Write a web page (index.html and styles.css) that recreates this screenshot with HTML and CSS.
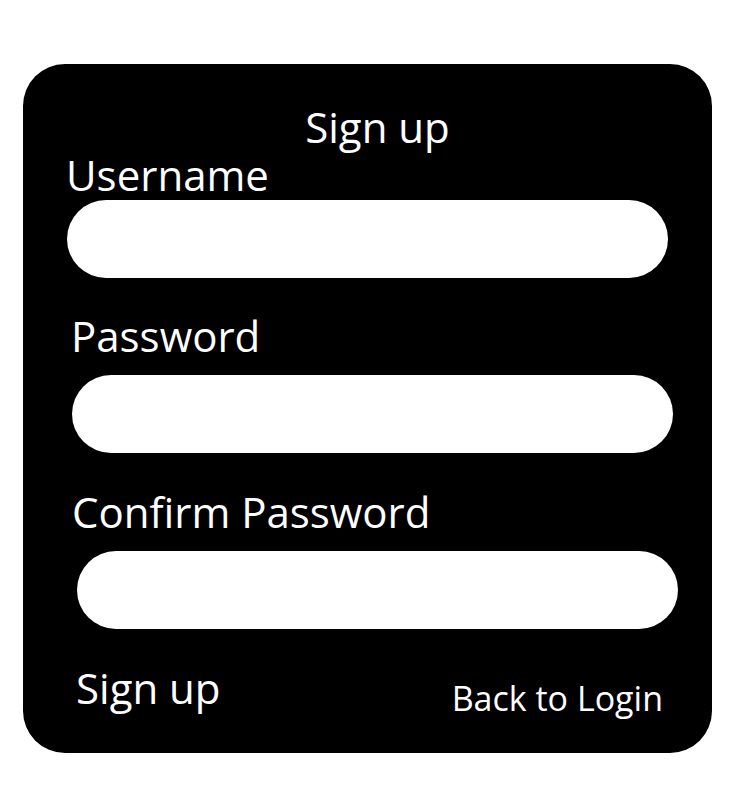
FILE: index.html
```html
<!DOCTYPE html>
<html lang="en">
<head>
<meta charset="utf-8">
<title>Sign up</title>
<link rel="stylesheet" href="styles.css">
</head>
<body>
<main class="card">
  <h1 class="title">Sign up</h1>
  <div class="field field-1">
    <label class="label" for="username">Username</label>
    <input class="input" id="username" type="text">
  </div>
  <div class="field field-2">
    <label class="label" for="password">Password</label>
    <input class="input" id="password" type="password">
  </div>
  <div class="field field-3">
    <label class="label" for="confirm">Confirm Password</label>
    <input class="input" id="confirm" type="password">
  </div>
  <div class="actions">
    <button class="signup" type="button">Sign up</button>
    <a class="back" href="#">Back to Login</a>
  </div>
</main>
</body>
</html>
```
FILE: styles.css
```css
html, body {
  margin: 0;
  padding: 0;
  background: #ffffff;
}
body {
  font-family: "Open Sans", "Noto Sans", sans-serif;
  color: #ffffff;
}
.card {
  box-sizing: border-box;
  margin: 64px 0 0 23px;
  width: 689px;
  height: 689px;
  background: #000000;
  border-radius: 42px;
  display: flex;
  flex-direction: column;
  padding-top: 39px;
}
.title {
  margin: 0 0 0 20px;
  font-size: 42px;
  font-weight: 400;
  line-height: 48px;
  text-align: center;
  align-self: center;
}
.field {
  display: flex;
  flex-direction: column;
  align-items: flex-start;
}
.label {
  font-size: 42px;
  line-height: 48px;
}
.input {
  box-sizing: border-box;
  width: 601px;
  height: 78px;
  border: none;
  border-radius: 39px;
  background: #ffffff;
  outline: none;
  padding: 0 30px;
  font: inherit;
}
.field-1 {
  margin: 0 0 0 44px;
}
.field-1 .label {
  margin: 0 0 1px -1px;
}
.field-2 {
  margin: 34px 0 0 49px;
}
.field-2 .label {
  margin: 0 0 15px -1px;
}
.field-3 {
  margin: 35px 0 0 54px;
}
.field-3 .label {
  margin: 0 0 15px -5px;
}
.actions {
  display: flex;
  justify-content: space-between;
  align-items: flex-start;
  margin: 35px 49px 0 53px;
}
.signup {
  background: none;
  border: none;
  padding: 0;
  color: #ffffff;
  font: inherit;
  font-size: 42px;
  line-height: 48px;
}
.back {
  margin-top: 14px;
  color: #ffffff;
  text-decoration: none;
  font-size: 34px;
  line-height: 40px;
}
```
